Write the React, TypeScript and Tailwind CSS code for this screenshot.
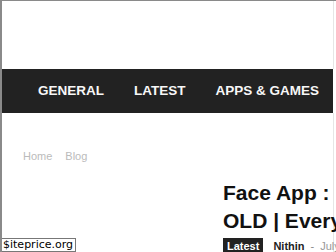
import React from 'react';

const navItems = ['GENERAL', 'LATEST', 'APPS & GAMES'];

export default function App() {
  return (
    <div className="relative h-[252px] w-[336px] overflow-hidden border-l-2 border-t border-[#8a8a8a] bg-white font-['Liberation_Sans',Arial,sans-serif]">
      {/* header area */}
      <div className="h-[68px] border-r border-[#e6e6e6] mr-[2px]" />

      {/* main nav */}
      <nav className="mr-[3px] flex h-[44px] items-center overflow-hidden bg-[#222222] pl-[21px] whitespace-nowrap">
        {navItems.map(item => (
          <a key={item} className="px-[15px] text-[13.5px] font-bold text-[#f7f7f7]">
            {item}
          </a>
        ))}
      </nav>

      <div className="mr-[2px] border-r border-[#e6e6e6]">
        {/* breadcrumb */}
        <div className="flex gap-[13px] pl-[21px] pt-[37px] text-[11px] leading-[13px] text-[#bbbbbb]">
          <span>Home</span>
          <span>Blog</span>
        </div>

        {/* article header */}
        <div className="ml-[221px] mt-[16px] w-[560px]">
          <h1 className="whitespace-nowrap text-[21px] font-bold leading-[28px] text-[#111111]">
            Face App : Make Yourself Look
            <br />
            OLD | Everyone Is Using This App
          </h1>
          <div className="mt-[3px] flex items-center whitespace-nowrap text-[11px]">
            <span className="bg-[#222222] px-[4px] py-[2px] font-bold leading-[13px] text-white">Latest</span>
            <span className="ml-[10px] font-bold text-[#222222]">Nithin</span>
            <span className="mx-[6px] text-[#888888]">-</span>
            <span className="text-[#999999]">July 18, 2019</span>
          </div>
        </div>
      </div>

      {/* watermark */}
      <div className="absolute bottom-0 left-[-2px] border border-[#777777] bg-white px-[2px] font-['DejaVu_Sans',sans-serif] text-[11px] leading-[12px] text-black">
        $iteprice.org
      </div>
    </div>
  );
}
